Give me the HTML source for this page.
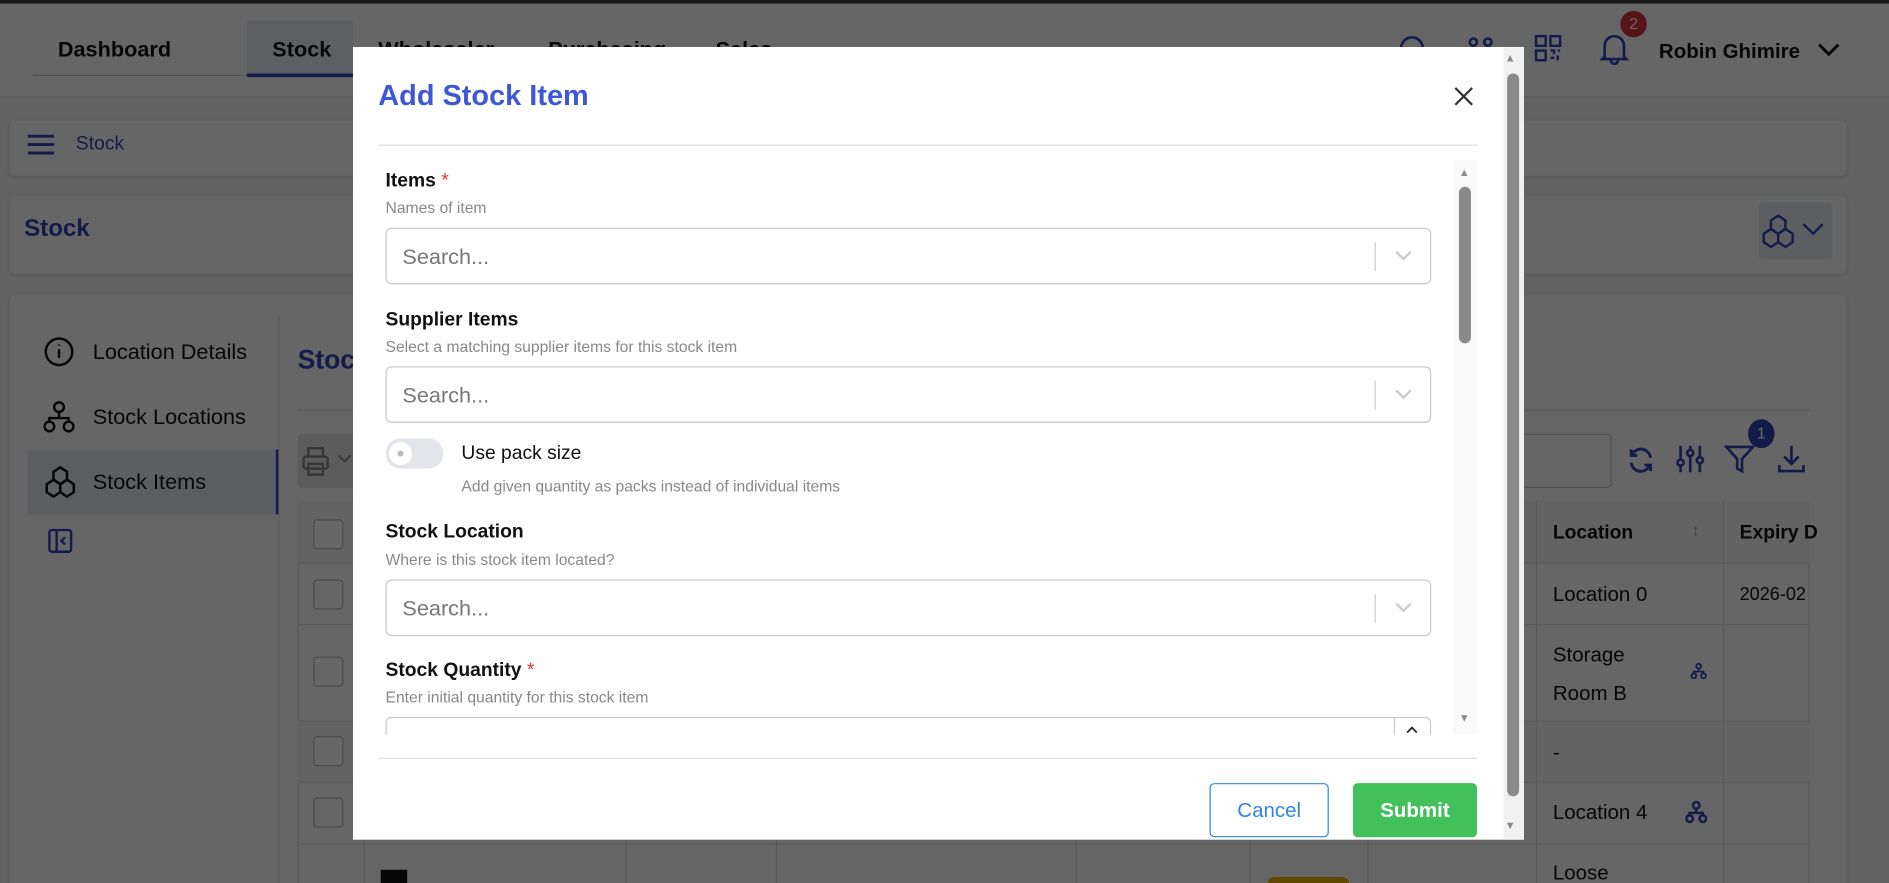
<!DOCTYPE html>
<html><head><meta charset="utf-8"><style>
*{box-sizing:border-box;margin:0;padding:0}
html,body{width:1889px;height:883px;overflow:hidden;background:#fff;font-family:"Liberation Sans",sans-serif}
#w{position:absolute;left:0;top:0;width:1568px;height:733px;transform:scale(1.20472);transform-origin:0 0;background:#f4f5f7;overflow:hidden}
.a{position:absolute}
.card{position:absolute;background:#fff;border-radius:4px;box-shadow:0 1px 3px rgba(0,0,0,.12)}
.t{position:absolute;white-space:nowrap;line-height:1}
.blue{color:#2f44b8}
#ov{position:absolute;left:0;top:0;width:1568px;height:733px;background:rgba(0,0,0,.6)}
.lbl{position:absolute;left:320px;font-size:16px;font-weight:bold;color:#111;line-height:1}
.sub{position:absolute;left:320px;font-size:13px;color:#888;line-height:1}
.inp{position:absolute;left:320px;width:868px;height:47px;border:1px solid #c8c8c8;border-radius:5px;background:#fff}
.inp .ph{position:absolute;left:13px;top:14px;font-size:18px;color:#777;line-height:1}
.inp .sep{position:absolute;left:820px;top:11px;width:1px;height:24px;background:#ccc}
.inp svg{position:absolute;left:836px;top:17px}
</style></head><body><div id="w">
<div class="a" style="left:0;top:0;width:1568px;height:3px;background:#3a3a3a"></div>
<div class="a" style="left:0;top:3px;width:1568px;height:78px;background:#fff;border-bottom:1px solid #e3e3e3"></div>
<div class="a" style="left:27px;top:62px;width:178px;height:1px;background:#ccc"></div>
<div class="a" style="left:205px;top:17px;width:88px;height:47px;background:#eceef8;border-bottom:3px solid #2f44b8"></div>
<div class="t" style="left:48px;top:32px;font-size:18px;font-weight:bold;color:#111">Dashboard</div>
<div class="t" style="left:226px;top:32px;font-size:18px;font-weight:bold;color:#111">Stock</div>
<div class="t" style="left:314px;top:32px;font-size:18px;font-weight:bold;color:#111">Wholesaler</div>
<div class="t" style="left:455px;top:32px;font-size:18px;font-weight:bold;color:#111">Purchasing</div>
<div class="t" style="left:594px;top:32px;font-size:18px;font-weight:bold;color:#111">Sales</div>
<svg class="a" style="left:1160px;top:28px" width="26" height="26" viewBox="0 0 26 26" fill="none" stroke="#2f44b8" stroke-width="2.2"><circle cx="12" cy="12" r="9"/></svg>
<svg class="a" style="left:1218px;top:30px" width="22" height="22" viewBox="0 0 22 22" fill="none" stroke="#2f44b8" stroke-width="2.2"><circle cx="5" cy="5" r="3"/><circle cx="17" cy="5" r="3"/></svg>
<svg class="a" style="left:1273px;top:28px" width="24" height="24" viewBox="0 0 24 24" fill="none" stroke="#2f44b8" stroke-width="2"><rect x="2" y="2" width="8" height="8"/><rect x="14" y="2" width="8" height="8"/><rect x="2" y="14" width="8" height="8"/><path d="M14 14h3v3M20 14h2M14 20h3M20 18v4"/></svg>
<svg class="a" style="left:1327px;top:26px" width="26" height="28" viewBox="0 0 26 28" fill="none" stroke="#2f44b8" stroke-width="2.2"><path d="M5 21V12a8 8 0 0116 0v9l2 2H3z"/><path d="M10 24a3 3 0 006 0"/></svg>
<div class="a" style="left:1345px;top:9px;width:22px;height:22px;border-radius:50%;background:#d9363e;color:#fff;font-size:13px;text-align:center;line-height:22px">2</div>
<div class="t" style="left:1377px;top:34px;font-size:17px;font-weight:bold;color:#111">Robin Ghimire</div>
<svg class="a" style="left:1508px;top:34px" width="20" height="14" viewBox="0 0 20 14" fill="none" stroke="#111" stroke-width="2.4"><path d="M2 3l8 8 8-8"/></svg>
<div class="card" style="left:8px;top:100px;width:1525px;height:46px"></div>
<svg class="a" style="left:23px;top:110px" width="22" height="20" viewBox="0 0 22 20" stroke="#2f44b8" stroke-width="2.4"><path d="M0 3h22M0 10h22M0 17h22"/></svg>
<div class="t blue" style="left:63px;top:112px;font-size:16px">Stock</div>
<div class="card" style="left:8px;top:163px;width:1525px;height:64px"></div>
<div class="t blue" style="left:20px;top:180px;font-size:20px;font-weight:bold">Stock</div>
<div class="a" style="left:1460px;top:168px;width:61px;height:47px;background:#e8eaf6;border-radius:3px"></div>
<svg class="a" style="left:1461px;top:177px" width="30" height="32" viewBox="0 0 30 32" fill="none" stroke="#2f44b8" stroke-width="2"><path d="M15 2l6 4v7l-6 4-6-4V6z"/><path d="M9 13l6 4v7l-6 4-6-4v-7zM21 13l6 4v7l-6 4-6-4v-7z"/></svg>
<svg class="a" style="left:1495px;top:184px" width="20" height="12" viewBox="0 0 20 12" fill="none" stroke="#2f44b8" stroke-width="2"><path d="M2 2l8 8 8-8"/></svg>
<div class="card" style="left:8px;top:245px;width:1525px;height:500px"></div>
<div class="a" style="left:231px;top:262px;width:1px;height:480px;background:#e3e3e3"></div>
<div class="a" style="left:23px;top:373px;width:208px;height:54px;background:#e8eaf6;border-right:2px solid #2f44b8"></div>
<svg class="a" style="left:36px;top:279px" width="26" height="26" viewBox="0 0 26 26" fill="none" stroke="#111" stroke-width="2"><circle cx="13" cy="13" r="11"/><path d="M13 11v7M13 7v1"/></svg>
<div class="t" style="left:77px;top:283px;font-size:18px;color:#111">Location Details</div>
<svg class="a" style="left:36px;top:332px" width="26" height="28" viewBox="0 0 26 28" fill="none" stroke="#111" stroke-width="2"><circle cx="13" cy="6" r="4"/><circle cx="5" cy="22" r="4"/><circle cx="21" cy="22" r="4"/><path d="M13 10v5M5 18v-3h16v3"/></svg>
<div class="t" style="left:77px;top:337px;font-size:18px;color:#111">Stock Locations</div>
<svg class="a" style="left:35px;top:386px" width="30" height="30" viewBox="0 0 30 32" fill="none" stroke="#111" stroke-width="2.2"><path d="M15 2l6 4v7l-6 4-6-4V6z"/><path d="M9 13l6 4v7l-6 4-6-4v-7zM21 13l6 4v7l-6 4-6-4v-7z"/></svg>
<div class="t" style="left:77px;top:391px;font-size:18px;color:#111">Stock Items</div>
<svg class="a" style="left:39px;top:438px" width="22" height="22" viewBox="0 0 22 22" fill="none" stroke="#2f44b8" stroke-width="2"><rect x="2" y="2" width="18" height="18" rx="2"/><path d="M8 2v18M15 8l-3 3 3 3"/></svg>
<div class="t blue" style="left:247px;top:288px;font-size:22px;font-weight:bold">Stock Items</div>
<div class="a" style="left:247px;top:340px;width:1255px;height:1px;background:#ddd"></div>
<div class="a" style="left:247px;top:360px;width:53px;height:45px;background:#e5e5e5;border-radius:3px"></div>
<svg class="a" style="left:250px;top:370px" width="24" height="26" viewBox="0 0 24 26" fill="none" stroke="#888" stroke-width="2"><rect x="6" y="2" width="12" height="7"/><rect x="2" y="9" width="20" height="10" rx="2"/><rect x="6" y="15" width="12" height="9"/></svg>
<svg class="a" style="left:280px;top:377px" width="12" height="8" viewBox="0 0 12 8" fill="none" stroke="#888" stroke-width="1.6"><path d="M1 1l5 5 5-5"/></svg>
<div class="a" style="left:1100px;top:360px;width:238px;height:45px;border:1px solid #ccc;border-radius:4px;background:#fff"></div>
<svg class="a" style="left:1350px;top:370px" width="24" height="24" viewBox="0 0 24 24" fill="none" stroke="#2f44b8" stroke-width="2.4"><path d="M20 10a8 8 0 00-15-3M4 14a8 8 0 0015 3M4 3v5h5M20 21v-5h-5"/></svg>
<svg class="a" style="left:1391px;top:368px" width="24" height="26" viewBox="0 0 24 26" fill="none" stroke="#2f44b8" stroke-width="2.2"><path d="M4 2v22M12 2v22M20 2v22"/><circle cx="4" cy="16" r="2.5" fill="#fff"/><circle cx="12" cy="8" r="2.5" fill="#fff"/><circle cx="20" cy="14" r="2.5" fill="#fff"/></svg>
<svg class="a" style="left:1431px;top:368px" width="26" height="26" viewBox="0 0 26 26" fill="none" stroke="#2f44b8" stroke-width="2.2"><path d="M2 3h22l-9 10v10l-4-2v-8z"/></svg>
<div class="a" style="left:1451px;top:348px;width:22px;height:24px;border-radius:50%;background:#2f44b8;color:#fff;font-size:13px;text-align:center;line-height:24px">1</div>
<svg class="a" style="left:1474px;top:368px" width="26" height="26" viewBox="0 0 26 26" fill="none" stroke="#2f44b8" stroke-width="2.2"><path d="M13 2v15M7 11l6 6 6-6M3 18v5h20v-5"/></svg>
<div class="a" style="left:247px;top:416px;width:1255px;height:330px;border:1px solid #e0e0e0;background:#fff"></div>
<div class="a" style="left:247px;top:416px;width:1255px;height:52px;background:#f7f7f7;border-bottom:1px solid #e0e0e0"></div>
<div class="a" style="left:247px;top:518px;width:1255px;height:1px;background:#e0e0e0"></div>
<div class="a" style="left:247px;top:598px;width:1255px;height:52px;background:#f7f7f7;border-top:1px solid #e0e0e0;border-bottom:1px solid #e0e0e0"></div>
<div class="a" style="left:247px;top:700px;width:1255px;height:1px;background:#e0e0e0"></div>
<div class="a" style="left:302px;top:416px;width:1px;height:330px;background:#e0e0e0"></div>
<div class="a" style="left:519px;top:416px;width:1px;height:330px;background:#e0e0e0"></div>
<div class="a" style="left:644px;top:416px;width:1px;height:330px;background:#e0e0e0"></div>
<div class="a" style="left:893px;top:416px;width:1px;height:330px;background:#e0e0e0"></div>
<div class="a" style="left:1037px;top:416px;width:1px;height:330px;background:#e0e0e0"></div>
<div class="a" style="left:1135px;top:416px;width:1px;height:330px;background:#e0e0e0"></div>
<div class="a" style="left:1275px;top:416px;width:1px;height:330px;background:#e0e0e0"></div>
<div class="a" style="left:1430px;top:416px;width:1px;height:330px;background:#e0e0e0"></div>
<div class="a" style="left:260px;top:431px;width:25px;height:25px;border:1px solid #bbb;border-radius:3px;background:#fff"></div>
<div class="a" style="left:260px;top:481px;width:25px;height:25px;border:1px solid #bbb;border-radius:3px;background:#fff"></div>
<div class="a" style="left:260px;top:545px;width:25px;height:25px;border:1px solid #bbb;border-radius:3px;background:#fff"></div>
<div class="a" style="left:260px;top:611px;width:25px;height:25px;border:1px solid #bbb;border-radius:3px;background:#fff"></div>
<div class="a" style="left:260px;top:662px;width:25px;height:25px;border:1px solid #bbb;border-radius:3px;background:#fff"></div>
<div class="a" style="left:316px;top:722px;width:22px;height:14px;background:#111"></div>
<div class="a" style="left:1052px;top:728px;width:68px;height:12px;background:#f0b400;border-radius:8px"></div>
<div class="t" style="left:1289px;top:435px;font-size:16px;font-weight:bold;color:#111">Location</div>
<div class="t" style="left:1404px;top:433px;font-size:14px;color:#aaa">↕</div>
<div class="t" style="left:1444px;top:435px;font-size:16px;font-weight:bold;color:#111">Expiry D</div>
<div class="t" style="left:1289px;top:485px;font-size:17px;color:#111">Location 0</div>
<div class="t" style="left:1444px;top:486px;font-size:15px;color:#111">2026-02</div>
<div class="t" style="left:1289px;top:535px;font-size:17px;color:#111">Storage</div>
<div class="t" style="left:1289px;top:567px;font-size:17px;color:#111">Room B</div>
<div class="t" style="left:1289px;top:616px;font-size:17px;color:#111">-</div>
<div class="t" style="left:1289px;top:666px;font-size:17px;color:#111">Location 4</div>
<div class="t" style="left:1289px;top:716px;font-size:17px;color:#111">Loose</div>
<svg class="a" style="left:1403px;top:550px" width="14" height="14" viewBox="0 0 26 28" fill="none" stroke="#2f44b8" stroke-width="3"><circle cx="13" cy="6" r="4"/><circle cx="5" cy="22" r="4"/><circle cx="21" cy="22" r="4"/><path d="M13 10v5M5 18v-3h16v3"/></svg>
<svg class="a" style="left:1399px;top:664px" width="18" height="20" viewBox="0 0 26 28" fill="none" stroke="#2f44b8" stroke-width="3"><circle cx="13" cy="6" r="4"/><circle cx="5" cy="22" r="4"/><circle cx="21" cy="22" r="4"/><path d="M13 10v5M5 18v-3h16v3"/></svg>
<div id="ov"></div>
<div class="a" style="left:293px;top:39px;width:972px;height:658px;background:#fff"></div>
<div class="a" style="left:1248px;top:39px;width:17px;height:658px;background:#f1f1f1"></div>
<div class="a" style="left:1251px;top:61px;width:10px;height:600px;background:#8a8a8a;border-radius:5px"></div>
<div class="t" style="left:1249px;top:44px;font-size:9px;color:#8a8a8a">▲</div>
<div class="t" style="left:1249px;top:681px;font-size:9px;color:#8a8a8a">▼</div>
<div class="t" style="left:314px;top:68px;font-size:24px;font-weight:bold;color:#3d58d6">Add Stock Item</div>
<svg class="a" style="left:1207px;top:72px" width="16" height="16" viewBox="0 0 16 16" stroke="#333" stroke-width="1.8"><path d="M1 1l14 14M15 1L1 15"/></svg>
<div class="a" style="left:314px;top:120px;width:912px;height:1px;background:#ddd"></div>
<div class="a" style="left:1206px;top:133px;width:20px;height:477px;background:#fafafa"></div>
<div class="a" style="left:1211px;top:155px;width:10px;height:130px;background:#8a8a8a;border-radius:5px"></div>
<div class="t" style="left:1211px;top:139px;font-size:9px;color:#8a8a8a">▲</div>
<div class="t" style="left:1211px;top:592px;font-size:9px;color:#8a8a8a">▼</div>
<div class="lbl" style="top:143px">Items <span style="color:#e33;font-weight:normal">*</span></div>
<div class="sub" style="top:166px">Names of item</div>
<div class="inp" style="top:189px"><div class="ph">Search...</div><div class="sep"></div><svg width="16" height="10" viewBox="0 0 16 10" fill="none" stroke="#ccc" stroke-width="2"><path d="M2 2l6 6 6-6"/></svg></div>
<div class="lbl" style="top:258px">Supplier Items</div>
<div class="sub" style="top:281px">Select a matching supplier items for this stock item</div>
<div class="inp" style="top:304px"><div class="ph">Search...</div><div class="sep"></div><svg width="16" height="10" viewBox="0 0 16 10" fill="none" stroke="#ccc" stroke-width="2"><path d="M2 2l6 6 6-6"/></svg></div>
<div class="a" style="left:320px;top:364px;width:48px;height:25px;border-radius:13px;background:#e3e5ea"></div>
<div class="a" style="left:323px;top:367px;width:19px;height:19px;border-radius:50%;background:#fff"></div>
<div class="a" style="left:330px;top:374px;width:5px;height:5px;border-radius:50%;background:#bbb"></div>
<div class="t" style="left:383px;top:369px;font-size:16px;color:#111">Use pack size</div>
<div class="t" style="left:383px;top:397px;font-size:13px;color:#888">Add given quantity as packs instead of individual items</div>
<div class="lbl" style="top:434px">Stock Location</div>
<div class="sub" style="top:458px">Where is this stock item located?</div>
<div class="inp" style="top:481px"><div class="ph">Search...</div><div class="sep"></div><svg width="16" height="10" viewBox="0 0 16 10" fill="none" stroke="#ccc" stroke-width="2"><path d="M2 2l6 6 6-6"/></svg></div>
<div class="lbl" style="top:549px">Stock Quantity <span style="color:#e33;font-weight:normal">*</span></div>
<div class="sub" style="top:572px">Enter initial quantity for this stock item</div>
<div class="a" style="left:320px;top:595px;width:868px;height:15px;border:1px solid #c8c8c8;border-bottom:none;border-radius:5px 5px 0 0;overflow:hidden"><div class="a" style="left:836px;top:0;width:1px;height:15px;background:#ccc"></div><svg class="a" style="left:846px;top:6px" width="10" height="7" viewBox="0 0 10 7" fill="none" stroke="#222" stroke-width="1.5"><path d="M1 6l4-4 4 4"/></svg></div>
<div class="a" style="left:314px;top:629px;width:912px;height:1px;background:#ddd"></div>
<div class="a" style="left:1004px;top:650px;width:99px;height:45px;border:1px solid #2e86de;border-radius:4px;color:#2e86de;font-size:17px;text-align:center;line-height:43px">Cancel</div>
<div class="a" style="left:1123px;top:650px;width:103px;height:45px;background:#42c15a;border-radius:4px;color:#fff;font-size:17px;font-weight:bold;text-align:center;line-height:45px">Submit</div>
</div></body></html>
